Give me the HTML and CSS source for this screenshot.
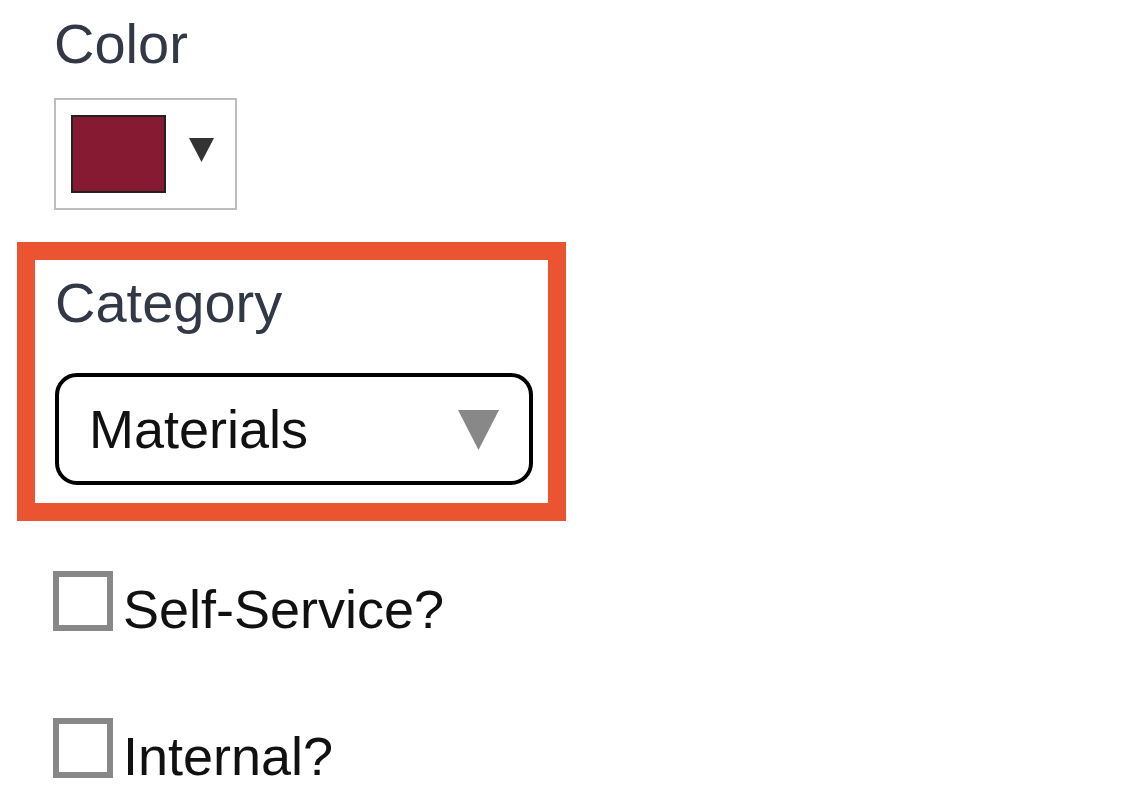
FILE: index.html
```html
<!DOCTYPE html>
<html lang="en">
<head>
<meta charset="utf-8">
<title>Form</title>
<link rel="stylesheet" href="styles.css">
</head>
<body>
<div class="form">
  <div class="field">
    <div class="label">Color</div>
    <div class="color-picker">
      <span class="swatch"></span>
      <svg class="caret" width="25" height="24" viewBox="0 0 25 24"><polygon points="0,0 25,0 12.5,24" fill="#333"/></svg>
    </div>
  </div>
  <div class="highlight">
    <div class="label">Category</div>
    <div class="select">
      <span class="select-value">Materials</span>
      <svg class="select-caret" width="41" height="40" viewBox="0 0 41 40"><polygon points="0,0 41,0 20.5,40" fill="#888"/></svg>
    </div>
  </div>
  <div class="check-row first">
    <span class="checkbox"></span>
    <span class="check-label">Self-Service?</span>
  </div>
  <div class="check-row second">
    <span class="checkbox"></span>
    <span class="check-label">Internal?</span>
  </div>
</div>
</body>
</html>
```
FILE: styles.css
```css
html, body {
  margin: 0;
  padding: 0;
  background: #ffffff;
}
body {
  font-family: "Liberation Sans", Arial, sans-serif;
}
.form {
  padding: 12px 0 0 54px;
  display: flex;
  flex-direction: column;
  align-items: flex-start;
}
.label {
  font-size: 56px;
  line-height: 64px;
  color: #323846;
}
.color-picker {
  margin-top: 22px;
  width: 183px;
  height: 112px;
  box-sizing: border-box;
  border: 2px solid #bdbdbd;
  padding: 15px 0 0 15px;
  display: flex;
  align-items: flex-start;
}
.swatch {
  width: 95px;
  height: 78px;
  box-sizing: border-box;
  border: 2px solid #222222;
  background: #861a33;
}
.caret {
  margin: 23px 0 0 23px;
}
.highlight {
  margin: 32px 0 0 -37px;
  width: 549px;
  box-sizing: border-box;
  border: 18px solid #ea5430;
  padding: 11px 0 18px 20px;
}
.select {
  margin-top: 38px;
  width: 478px;
  height: 112px;
  box-sizing: border-box;
  border: 4px solid #000000;
  border-radius: 22px;
  padding: 0 30px 0 30px;
  display: flex;
  align-items: center;
  justify-content: space-between;
}
.select-value {
  font-size: 54px;
  line-height: 62px;
  color: #111111;
}
.select-caret {
  margin-top: 2px;
}
.check-row {
  display: flex;
  align-items: flex-start;
  margin-left: -1px;
}
.check-row.first {
  margin-top: 50px;
}
.check-row.second {
  margin-top: 79px;
}
.checkbox {
  width: 60px;
  height: 60px;
  box-sizing: border-box;
  border: 6px solid #888888;
  background: #ffffff;
}
.check-label {
  margin: 8px 0 0 10px;
  font-size: 54px;
  line-height: 60px;
  color: #111111;
}
```
